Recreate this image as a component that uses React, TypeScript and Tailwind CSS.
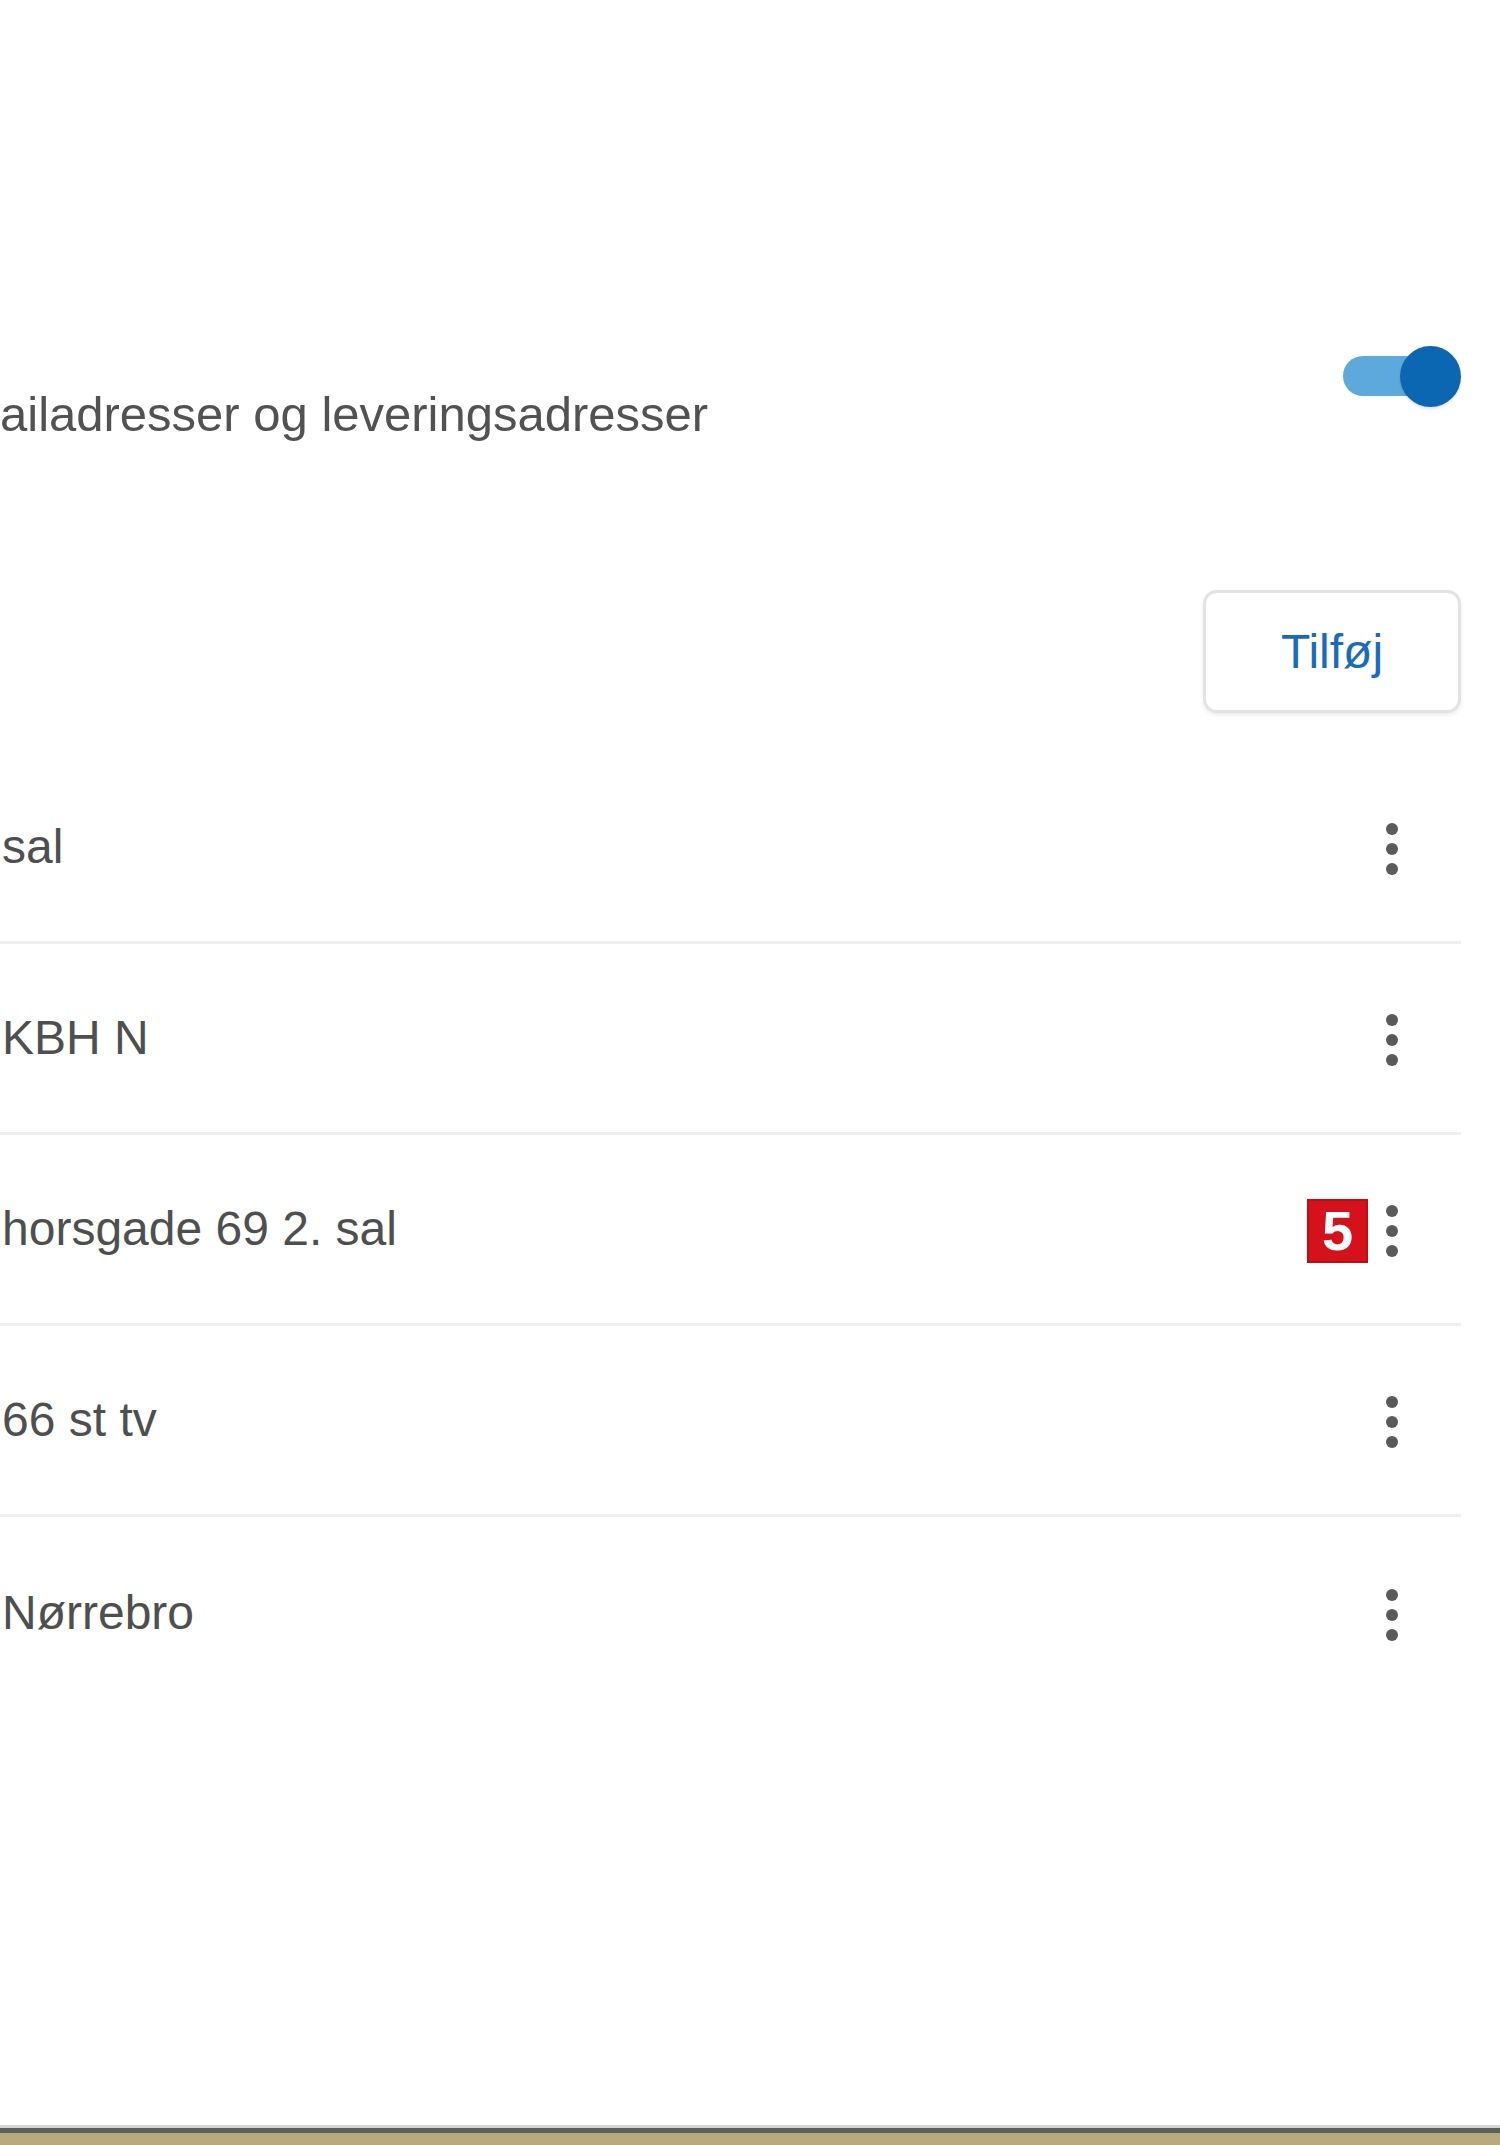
import React from "react";

/**
 * Zoomed-in settings card: a toggle for address sync, an "add" button
 * and a list of saved addresses, each with a kebab menu.
 */

interface AddressRow {
  id: string;
  label: string;
  badge?: string;
}

const ROWS: AddressRow[] = [
  { id: "a1", label: "sal" },
  { id: "a2", label: "KBH N" },
  { id: "a3", label: "horsgade 69 2. sal", badge: "5" },
  { id: "a4", label: "66 st tv" },
  { id: "a5", label: "Nørrebro" },
];

function Toggle() {
  return (
    <div className="relative h-[62px] w-[120px] flex-none">
      <div className="absolute left-[2px] top-[10px] h-[40px] w-[104px] rounded-full bg-[#5ea9dc]" />
      <div className="absolute left-[59px] top-0 h-[61px] w-[61px] rounded-full bg-[#0b67b2] shadow-[0_2px_3px_rgba(0,0,0,0.12)]" />
    </div>
  );
}

function Kebab() {
  return (
    <svg width="20" height="60" viewBox="0 0 20 60" className="flex-none">
      <circle cx="10" cy="10" r="6" fill="#5a5a5a" />
      <circle cx="10" cy="30" r="6" fill="#5a5a5a" />
      <circle cx="10" cy="50" r="6" fill="#5a5a5a" />
    </svg>
  );
}

function Row({ row, last }: { row: AddressRow; last: boolean }) {
  return (
    <li
      className={`flex h-[191px] items-center justify-between ${
        last ? "" : "border-b-[3px] border-[#efefef]"
      }`}
    >
      <span className="ml-[2px] whitespace-nowrap text-[48px] leading-none text-[#4f4f4f]">
        {row.label}
      </span>
      <div className="mr-[59px] mt-[4px] flex items-center gap-[14px]">
        {row.badge && (
          <span className="flex h-[64px] w-[61px] items-center justify-center border-2 border-[#c00d14] bg-[#d5121b] text-[56px] font-bold leading-none text-white">
            {row.badge}
          </span>
        )}
        <Kebab />
      </div>
    </li>
  );
}

export default function App() {
  return (
    <div className="flex h-[2145px] w-[1500px] flex-col overflow-hidden bg-[#b8a97e] font-['Liberation_Sans',Arial,sans-serif]">
      <div className="h-[2125px] flex-none overflow-hidden bg-white pr-[39px]">
        <div className="mt-[346px] flex h-[107px] items-start justify-between">
          <p className="mt-[31px] whitespace-nowrap text-[49px] leading-[75px] text-[#525252]">
            ailadresser og leveringsadresser
          </p>
          <Toggle />
        </div>

        <div className="mt-[137px] flex justify-end">
          <button className="h-[123px] w-[258px] rounded-[14px] border-[3px] border-[#e3e3e3] bg-white text-[48px] leading-none text-[#1b6cb8] shadow-[0_2px_4px_rgba(0,0,0,0.08)]">
            Tilføj
          </button>
        </div>

        <ul className="mt-[40px]">
          {ROWS.map((r, i) => (
            <Row key={r.id} row={r} last={i === ROWS.length - 1} />
          ))}
        </ul>
      </div>
      <div className="h-[3px] flex-none bg-[#d3d6d4]" />
      <div className="h-[5px] flex-none bg-[#5a615b]" />
    </div>
  );
}
